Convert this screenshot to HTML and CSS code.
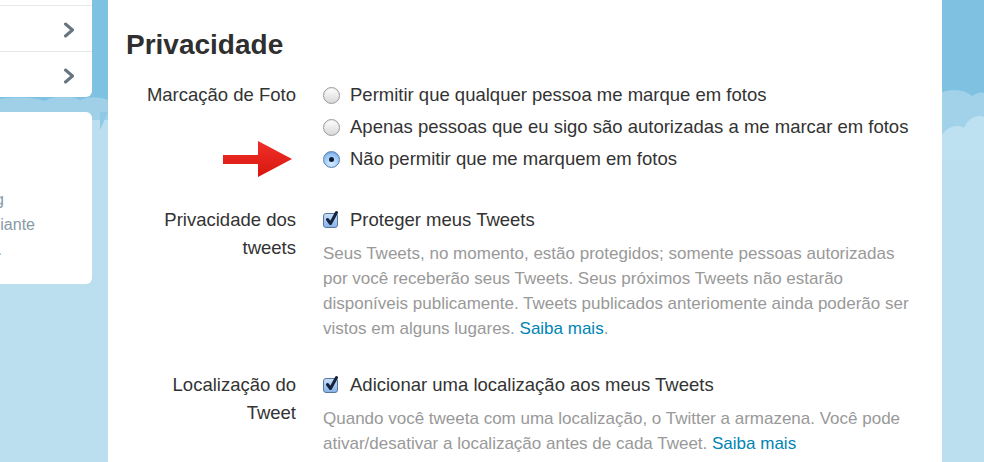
FILE: index.html
```html
<!DOCTYPE html>
<html lang="pt-BR">
<head>
<meta charset="utf-8">
<title>Privacidade</title>
<link rel="stylesheet" href="styles.css">
</head>
<body>
<div class="sky">
  <svg width="984" height="462" viewBox="0 0 984 462" xmlns="http://www.w3.org/2000/svg">
    <rect x="0" y="0" width="984" height="462" fill="#bcdff0"/>
    <rect x="0" y="0" width="984" height="104" fill="#7fc1e0"/>
    <path d="M0 99 C20 96 35 98 45 101 C55 95 70 95 80 100 C90 96 100 97 108 100 L108 120 L0 120 Z" fill="#9fd0e8"/>
    <path d="M108 112 L100 130 L100 112 Z" fill="#8fc9e4"/>
    <path d="M942 92 C955 88 965 90 972 96 C978 92 982 92 984 93 L984 140 L942 140 Z" fill="#a2d2ea"/>
    <path d="M942 135 C948 126 958 124 964 128 C968 118 978 114 984 117 L984 160 L942 160 Z" fill="#bee1f2"/>
  </svg>
</div>
<div class="page">
  <aside class="sidebar">
    <div class="card card-nav">
      <div class="nav-row"></div>
      <div class="nav-row">
        <svg class="chev" width="12" height="16" viewBox="0 0 12 16"><path d="M2.5 2 L9.5 8 L2.5 14" fill="none" stroke="#66757f" stroke-width="3" stroke-linecap="round" stroke-linejoin="round"/></svg>
      </div>
      <div class="nav-row">
        <svg class="chev" width="12" height="16" viewBox="0 0 12 16"><path d="M2.5 2 L9.5 8 L2.5 14" fill="none" stroke="#66757f" stroke-width="3" stroke-linecap="round" stroke-linejoin="round"/></svg>
      </div>
    </div>
    <div class="card card-info">
      <div class="info-line l1">Tweeting</div>
      <div class="info-line l2">Pular adiante</div>
      <div class="info-line l3">Mais.</div>
    </div>
  </aside>

  <main class="panel">
    <h1 class="title">Privacidade</h1>

    <div class="field field-photo">
      <div class="label">Marcação de Foto</div>
      <div class="control">
        <div class="option"><span class="radio"></span><span>Permitir que qualquer pessoa me marque em fotos</span></div>
        <div class="option"><span class="radio"></span><span>Apenas pessoas que eu sigo são autorizadas a me marcar em fotos</span></div>
        <div class="option"><span class="radio checked"></span><span>Não permitir que me marquem em fotos</span></div>
      </div>
      <svg class="arrow" width="70" height="37" viewBox="0 0 70 37" xmlns="http://www.w3.org/2000/svg">
        <defs>
          <linearGradient id="rg" x1="0" y1="0" x2="0" y2="1">
            <stop offset="0" stop-color="#f0302a"/>
            <stop offset="1" stop-color="#d8160f"/>
          </linearGradient>
        </defs>
        <path d="M0 14 L35 14 L35 0 L69 18 L35 36 L35 23 L0 23 Z" fill="url(#rg)"/>
      </svg>
    </div>

    <div class="field field-tweets">
      <div class="label label-2">Privacidade dos<br>tweets</div>
      <div class="control">
        <div class="option"><span class="check"><svg width="17" height="18" viewBox="0 0 17 18"><path d="M4.5 9.5 L7.5 13.5 L13.5 2.5" fill="none" stroke="#15223d" stroke-width="3" stroke-linecap="round" stroke-linejoin="round"/></svg></span><span>Proteger meus Tweets</span></div>
        <p class="desc">Seus Tweets, no momento, estão protegidos; somente pessoas autorizadas por você receberão seus Tweets. Seus próximos Tweets não estarão disponíveis publicamente. Tweets publicados anteriomente ainda poderão ser vistos em alguns lugares. <a class="link" href="#">Saiba mais</a>.</p>
      </div>
    </div>

    <div class="field field-location">
      <div class="label label-2">Localização do<br>Tweet</div>
      <div class="control">
        <div class="option"><span class="check"><svg width="17" height="18" viewBox="0 0 17 18"><path d="M4.5 9.5 L7.5 13.5 L13.5 2.5" fill="none" stroke="#15223d" stroke-width="3" stroke-linecap="round" stroke-linejoin="round"/></svg></span><span>Adicionar uma localização aos meus Tweets</span></div>
        <p class="desc">Quando você tweeta com uma localização, o Twitter a armazena. Você pode ativar/desativar a localização antes de cada Tweet. <a class="link" href="#">Saiba mais</a></p>
      </div>
    </div>
  </main>
</div>
</body>
</html>
```

FILE: styles.css
```css
html, body {
  margin: 0;
  padding: 0;
}
body {
  width: 984px;
  height: 462px;
  overflow: hidden;
  position: relative;
  font-family: "Liberation Sans", Arial, sans-serif;
  color: #333333;
}
.sky {
  position: absolute;
  left: 0;
  top: 0;
  z-index: 0;
}
.sky svg {
  display: block;
}
.page {
  position: relative;
  z-index: 1;
  display: flex;
  height: 462px;
}
.sidebar {
  flex: none;
  width: 92px;
  margin-right: 16px;
  overflow: hidden;
}
.card {
  width: 300px;
  margin-left: -208px;
  background: #ffffff;
}
.card-nav {
  margin-top: -41px;
  border-radius: 0 0 6px 6px;
}
.nav-row {
  height: 46px;
  display: flex;
  align-items: center;
  justify-content: flex-end;
  padding-right: 17px;
  box-sizing: border-box;
}
.nav-row + .nav-row {
  border-top: 1px solid #e4e9ed;
}
.chev {
  display: block;
  margin-top: 3px;
}
.card-info {
  margin-top: 15px;
  height: 172px;
  border-radius: 6px;
  padding-top: 75px;
  box-sizing: border-box;
}
.info-line {
  font-size: 16px;
  line-height: 25px;
  color: #8899a6;
  text-align: right;
  white-space: nowrap;
}
.info-line.l1 { padding-right: 88px; }
.info-line.l2 { padding-right: 57px; }
.info-line.l3 { padding-right: 90px; }

.panel {
  flex: none;
  width: 834px;
  background: #ffffff;
  padding: 28px 0 0 18px;
  box-sizing: border-box;
}
.title {
  margin: 0 0 17px;
  font-size: 28px;
  line-height: 34px;
  font-weight: bold;
  color: #2f2f2f;
}
.field {
  display: grid;
  grid-template-columns: 170px 1fr;
  column-gap: 27px;
  position: relative;
}
.field-tweets {
  margin-top: 29px;
}
.field-location {
  margin-top: 28px;
}
.label {
  text-align: right;
  font-size: 18.5px;
  line-height: 32px;
  color: #333333;
}
.label-2 {
  line-height: 28px;
  padding-top: 2px;
}
.control {
  min-width: 0;
}
.option {
  display: flex;
  align-items: center;
  height: 32px;
  font-size: 18.5px;
  color: #333333;
  white-space: nowrap;
}
.radio {
  flex: none;
  width: 17px;
  height: 17px;
  box-sizing: border-box;
  border-radius: 50%;
  border: 1px solid #9a9a9a;
  background: linear-gradient(#ffffff, #d8d8d8);
  box-shadow: inset 0 1px 1px rgba(0, 0, 0, 0.08);
  margin-right: 10px;
  position: relative;
}
.radio.checked {
  border-color: #5a80b6;
  background: radial-gradient(circle at 50% 75%, #d6ecff 0, #92c2f4 65%, #6a9fe0 100%);
}
.radio.checked::after {
  content: "";
  position: absolute;
  left: 5px;
  top: 5px;
  width: 5px;
  height: 5px;
  border-radius: 50%;
  background: #0c1a30;
}
.check {
  flex: none;
  width: 15px;
  height: 15px;
  box-sizing: border-box;
  border: 1px solid #56769f;
  border-radius: 3px;
  background: linear-gradient(#c8def8, #89b4e8);
  margin-right: 12px;
  position: relative;
}
.check svg {
  position: absolute;
  left: -1px;
  top: -4px;
}
.desc {
  margin: 5px 0 0;
  width: 596px;
  font-size: 17px;
  line-height: 25px;
  color: #999999;
}
.link {
  color: #0084b4;
  text-decoration: none;
}
.arrow {
  position: absolute;
  left: 97px;
  top: 62px;
}
```
